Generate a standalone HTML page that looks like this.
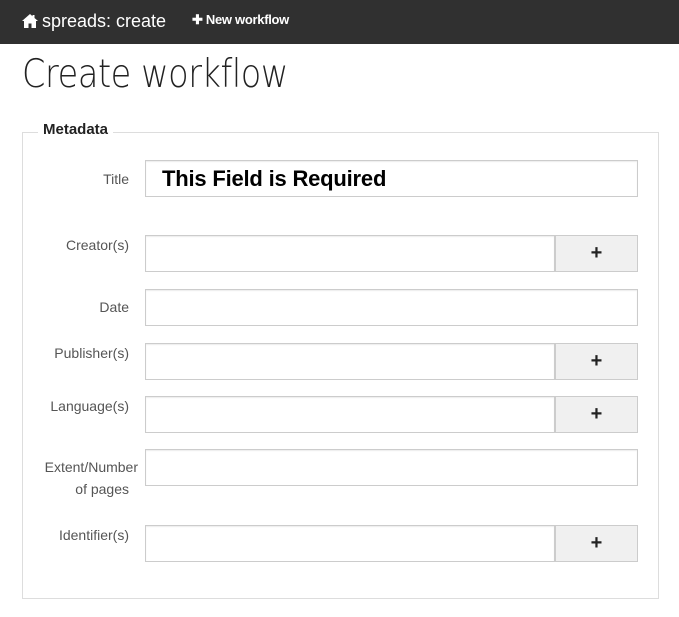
<!DOCTYPE html>
<html><head><style>
*{box-sizing:border-box;margin:0;padding:0}
body{width:679px;height:617px;background:#fff;font-family:"Liberation Sans",sans-serif;position:relative;overflow:hidden}
.nav{position:absolute;left:0;top:0;width:679px;height:44px;background:#303030;color:#fff}
.a{position:absolute}
.lbl{position:absolute;font-size:14px;color:#555;text-align:right;white-space:nowrap}
.in{position:absolute;border:1px solid #ccc;background:#fff;box-shadow:inset 0 1px 1px rgba(0,0,0,.075);height:37px}
.btn{position:absolute;left:555px;width:83px;height:37px;background:#f0f0f0;border:1px solid #ccc;font-weight:bold;font-size:20px;color:#222;text-align:center;line-height:34px}
</style></head><body>
<div class="nav">
<svg class="a" style="left:22px;top:14px" width="16" height="14" viewBox="0 0 16 14"><path d="M8 0L0 7h2v7h4.5V9.5h3V14H14V7h2L12.5 4V1h-2v1.3z" fill="#fff"/></svg>
<div class="a" style="left:42px;top:11px;font-size:18px;">spreads: create</div>
<div class="a" style="left:192px;top:12px;font-size:13px;font-weight:bold;letter-spacing:-0.3px">✚ New workflow</div>
</div>
<div class="a" style="left:22px;top:52px;font-size:39px;color:#222;font-family:'DejaVu Sans','Liberation Sans',sans-serif;font-weight:200;letter-spacing:-0.5px;transform:scaleX(.86);transform-origin:left">Create workflow</div>
<div class="a" style="left:22px;top:132px;width:637px;height:467px;border:1px solid #ddd"></div>
<div class="a" style="left:38px;top:121px;background:#fff;padding:0 5px;font-size:15px;font-weight:bold;color:#222">Metadata</div>

<div class="lbl" style="right:550px;top:171px">Title</div>
<div class="in" style="left:145px;top:160px;width:493px"></div>
<div class="a" style="left:162px;top:166px;font-size:22px;font-weight:bold;color:#000;letter-spacing:-0.2px">This Field is Required</div>

<div class="lbl" style="right:550px;top:237px">Creator(s)</div>
<div class="in" style="left:145px;top:235px;width:410px"></div><div class="btn" style="top:235px">+</div>

<div class="lbl" style="right:550px;top:299px">Date</div>
<div class="in" style="left:145px;top:289px;width:493px"></div>

<div class="lbl" style="right:550px;top:345px">Publisher(s)</div>
<div class="in" style="left:145px;top:343px;width:410px"></div><div class="btn" style="top:343px">+</div>

<div class="lbl" style="right:550px;top:398px">Language(s)</div>
<div class="in" style="left:145px;top:396px;width:410px"></div><div class="btn" style="top:396px">+</div>

<div class="lbl" style="right:541px;top:459px">Extent/Number</div>
<div class="lbl" style="right:550px;top:481px">of pages</div>
<div class="in" style="left:145px;top:449px;width:493px"></div>

<div class="lbl" style="right:550px;top:527px">Identifier(s)</div>
<div class="in" style="left:145px;top:525px;width:410px"></div><div class="btn" style="top:525px">+</div>
</body></html>
